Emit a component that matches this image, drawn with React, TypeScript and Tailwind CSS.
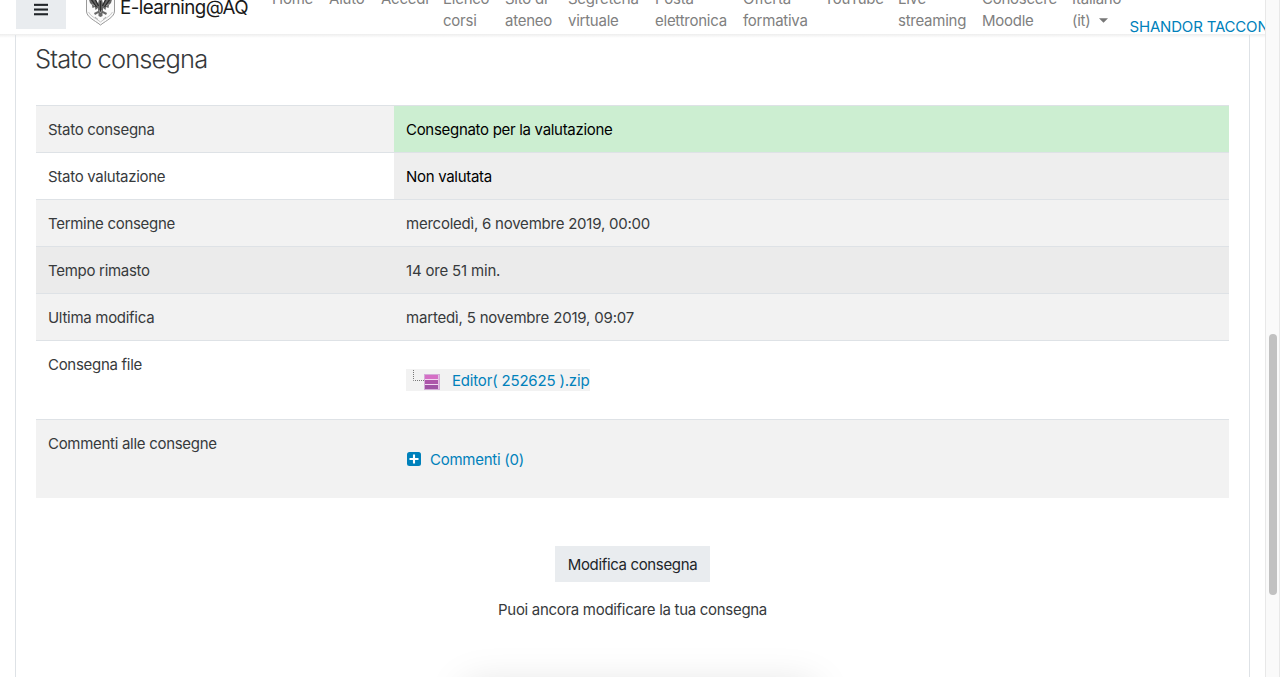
import type { ReactNode } from "react";

const navItems: { lines: string[]; width: string; caret?: boolean }[] = [
  { lines: ["Home"], width: "w-[57px]" },
  { lines: ["Aiuto"], width: "w-[52px]" },
  { lines: ["Accedi"], width: "w-[62px]" },
  { lines: ["Elenco", "corsi"], width: "w-[62px]" },
  { lines: ["Sito di", "ateneo"], width: "w-[63px]" },
  { lines: ["Segreteria", "virtuale"], width: "w-[87px]" },
  { lines: ["Posta", "elettronica"], width: "w-[88px]" },
  { lines: ["Offerta", "formativa"], width: "w-[81px]" },
  { lines: ["YouTube"], width: "w-[74px]" },
  { lines: ["Live", "streaming"], width: "w-[84px]" },
  { lines: ["Conoscere", "Moodle"], width: "w-[90px]" },
  { lines: ["Italiano", "(it)"], width: "w-[58px]", caret: true },
];

function Crest() {
  return (
    <svg className="ml-[19px] mb-px h-[40px] w-[31px] shrink-0" viewBox="0 0 31 40" fill="none">
      <path d="M1.500 1H29.500V25C29.500 31 22 34 15.500 39C9 34 1.500 31 1.500 25Z" fill="#fafafa" stroke="#999" strokeWidth="1" />
      <path d="M3.500 26C6 31 11 32 15.500 36C20 32 25 31 27.500 26" stroke="#c8c8c8" strokeWidth="1" />
      <path d="M10 31L13 33.500M21 31L18 33.500" stroke="#aaa" />
      <path d="M3 10L5 17L7 19L7.500 22L10 21L10.500 24L13 22L13 25L9 27L10 29L13.500 27L13.500 30L15.500 31L17.500 30L17.500 27L21 29L22 27L18 25L18 22L20.500 24L21 21L23.500 22L24 19L26 17L28 10L21 12L18 18L17 13H14L13 18L10 12Z" fill="#666" />
      <path d="M6 13L11.500 21M10 13L13.500 20M25 13L19.500 21M21 13L17.500 20M15.500 15V26" stroke="#2b2b2b" strokeWidth="1.300" />
      <path d="M7 18L10 20M24 18L21 20M14 24L15.500 27L17 24" stroke="#aaa" strokeWidth=".8" />
    </svg>
  );
}

function Navbar() {
  return (
    <header className="relative z-10 flex h-[34px] w-full items-end overflow-hidden bg-white">
      <div className="flex h-[34px] w-full items-end">
        <button className="mb-[5px] ml-4 flex h-[38px] w-[50px] shrink-0 items-end justify-center bg-[#e9ecef] pb-[13px]">
          <svg className="h-[13px] w-[14px]" viewBox="0 0 14 13" fill="#212529">
            <rect y="0.8" width="14" height="2.1" />
            <rect y="5.5" width="14" height="2.1" />
            <rect y="10.2" width="14" height="2.1" />
          </svg>
        </button>
        <div className="mb-[7px] flex w-[184px] shrink-0 items-end">
          <Crest />
          <span className="mb-[7px] ml-[4px] whitespace-nowrap text-[18.75px] leading-[24px] tracking-[-0.6px] text-[#1a1a1a]">
            E-learning@AQ
          </span>
        </div>
        <nav className="ml-[22px] flex shrink-0 items-start tracking-[-0.25px] text-[#808080]">
          {navItems.map((item) => (
            <div key={item.lines[0]} className={`${item.width} h-[46px] shrink-0 whitespace-nowrap leading-[22px]`}>
              {item.lines.map((line, i) => (
                <div key={line} className="flex items-center">
                  {line}
                  {item.caret && i === 1 && (
                    <svg className="ml-[9px] -mt-px h-[5px] w-[9px]" viewBox="0 0 9 5" fill="#777">
                      <path d="M0 .3H9L4.5 4.8Z" />
                    </svg>
                  )}
                </div>
              ))}
            </div>
          ))}
        </nav>
        <a className="mb-[-4px] -ml-[0.5px] shrink-0 whitespace-nowrap leading-[23px] text-[#0081bb]">SHANDOR TACCONI</a>
      </div>
    </header>
  );
}

function Row({ label, bg, valueBg = "", tall, children }: { label: string; bg: string; valueBg?: string; tall?: boolean; children: ReactNode }) {
  return (
    <div className={`flex border-t border-[#dee2e6] ${bg} ${tall ? "h-[79px]" : "h-[47px]"}`}>
      <div className="w-[358px] shrink-0 px-3 pt-[13px] leading-[22px] tracking-[-0.29px]">{label}</div>
      <div className={`flex-1 px-3 leading-[22px] ${valueBg} ${tall ? "pt-[28px]" : "pt-[13px]"}`}>{children}</div>
    </div>
  );
}

function ArchiveIcon() {
  return (
    <svg className="h-[22px] w-[34px] shrink-0" viewBox="0 0 34 22" fill="none">
      <path d="M7.5 1V11.5H18" stroke="#777" strokeDasharray="1 1" />
      <rect x="18" y="5" width="16" height="16" fill="#d3acd8" />
      <rect x="19" y="6" width="14" height="4" fill="#d56fc5" />
      <rect x="19" y="11" width="14" height="4" fill="#ad55aa" />
      <rect x="19" y="16" width="14" height="4" fill="#a052a5" />
      <path d="M19 10.5H33M19 15.5H33" stroke="#f0d8f0" />
      <path d="M32.5 6V20" stroke="#e4c3e4" />
    </svg>
  );
}

export default function App() {
  return (
    <div className="flex h-[677px] w-[1280px] overflow-hidden bg-white font-['Inter',sans-serif] text-[15px] tracking-[-0.18px] text-[#373a3c]">
      <div className="flex w-[1265px] shrink-0 flex-col overflow-hidden">
        <Navbar />
        <div className="h-1 w-full shrink-0 bg-linear-to-b from-[#ededed] to-white" />
        <main className="relative -mt-[3px] ml-[15px] h-[643px] w-[1235px] border-x border-[#dee2e6] px-5">
          <h2 className="-ml-px pt-[7px] text-[25.5px] font-light leading-[34px] tracking-[-0.85px]">Stato consegna</h2>
          <section className="mt-[29px]">
            <Row label="Stato consegna" bg="bg-[#f2f2f2]" valueBg="bg-[#cceed1] text-black tracking-[-0.3px]">Consegnato per la valutazione</Row>
            <Row label="Stato valutazione" bg="bg-white" valueBg="bg-[#eee] text-black tracking-[-0.3px]">Non valutata</Row>
            <Row label="Termine consegne" bg="bg-[#f2f2f2]" valueBg="tracking-[-0.23px]">mercoledì, 6 novembre 2019, 00:00</Row>
            <Row label="Tempo rimasto" bg="bg-[#ebebeb]">14 ore 51 min.</Row>
            <Row label="Ultima modifica" bg="bg-[#f2f2f2]">martedì, 5 novembre 2019, 09:07</Row>
            <Row label="Consegna file" bg="bg-white" tall>
              <div className="flex h-[22px] w-[184px] items-center whitespace-nowrap bg-[#f2f2f2] text-[#0081bb]">
                <ArchiveIcon />
                <a className="ml-3 pt-[2px]">Editor( 252625 ).zip</a>
              </div>
            </Row>
            <Row label="Commenti alle consegne" bg="bg-[#f2f2f2]" tall>
              <div className="flex items-center pt-px text-[#0081bb]">
                <svg className="-mt-px ml-px h-[14px] w-[14px]" viewBox="0 0 14 14">
                  <rect width="14" height="14" rx="2.5" fill="#0081bb" />
                  <path d="M7 2.5V11.5M2.5 7H11.5" stroke="white" strokeWidth="2.1" />
                </svg>
                <a className="ml-[9px] tracking-[-0.25px]">Commenti (0)</a>
              </div>
            </Row>
          </section>
          <div className="mt-12 flex flex-col items-center">
            <button className="h-9 w-[155px] whitespace-nowrap bg-[#e9ecef] pt-[2px] tracking-[-0.35px] text-[#212529]">Modifica consegna</button>
            <p className="mt-[17px] leading-[22px] tracking-[-0.3px]">Puoi ancora modificare la tua consegna</p>
          </div>
        </main>
      </div>
      <div className="flex w-[15px] shrink-0 border-x border-[#e8e8e8] bg-[#fafafa] pl-[3px]">
        <div className="mt-[334px] h-[261px] w-2 rounded-full bg-[#c1c1c1]" />
      </div>
      <div className="absolute left-[430px] top-[647px] h-[30px] w-[420px] overflow-hidden">
        <div className="mx-auto mt-[38px] h-20 w-[350px] shadow-[0_0_40px_rgba(0,0,0,0.13)]" />
      </div>
    </div>
  );
}
